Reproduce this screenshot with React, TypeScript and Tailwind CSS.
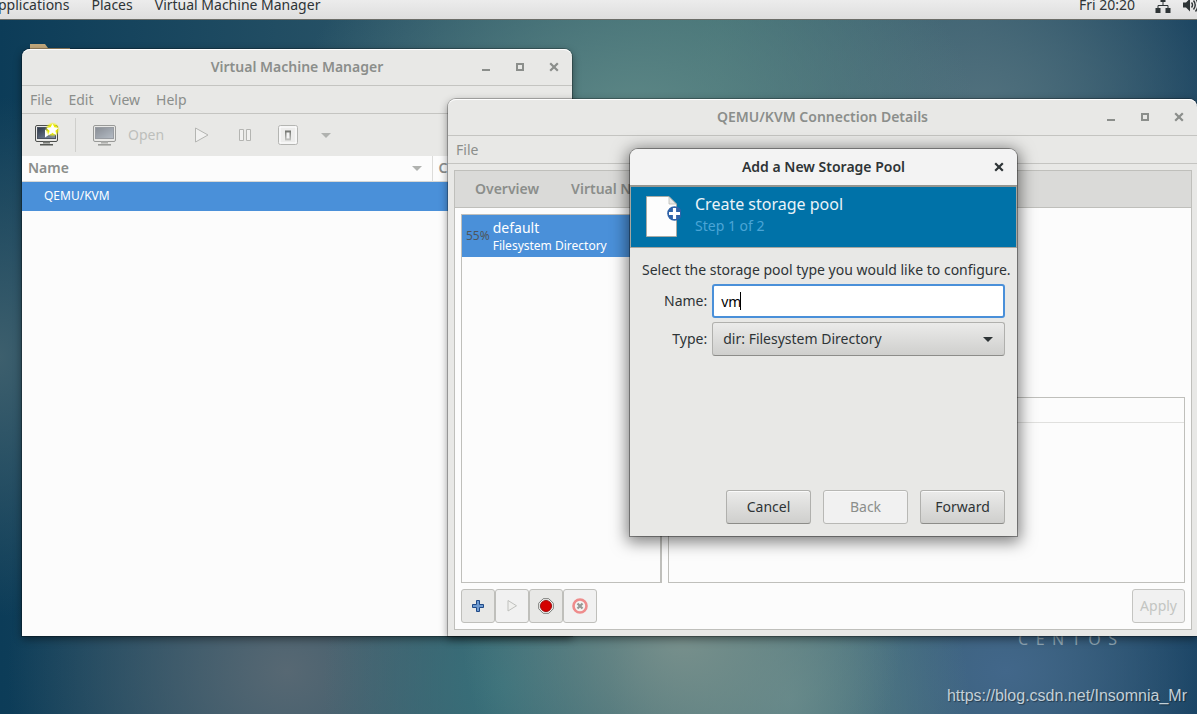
import type { ReactNode } from 'react';

const TitleBar = ({ title, minimizable = true }: { title: string; minimizable?: boolean }) => (
  <header className="grid h-9 grid-cols-[1fr_auto_1fr] items-center px-3">
    <span />
    <h2 className="font-semibold">{title}</h2>
    <div className="flex justify-end gap-[22px]">
      {minimizable && (
        <>
          <button aria-label="Minimize" className="size-3">
            <svg viewBox="0 0 12 12" className="size-3" fill="currentColor">
              <path d="M2 8h8v2H2z" />
            </svg>
          </button>
          <button aria-label="Maximize" className="size-3">
            <svg viewBox="0 0 12 12" className="size-3" fill="none" stroke="currentColor" strokeWidth="2">
              <path d="M3 3h6v6H3z" />
            </svg>
          </button>
        </>
      )}
      <button aria-label="Close" className="size-3">
        <svg viewBox="0 0 12 12" className="size-3" fill="none" stroke="currentColor" strokeWidth="2.2">
          <path d="M2.2 2.200l7.600 7.600M9.800 2.200L2.200 9.800" />
        </svg>
      </button>
    </div>
  </header>
);

const MenuBar = ({ items }: { items: string[] }) => (
  <nav className="flex h-[29px] items-center gap-4 border-y border-[#c4c4c1] px-2">
    {items.map((item) => (
      <button key={item}>{item}</button>
    ))}
  </nav>
);

const Monitor = ({ id, muted = false }: { id: string; muted?: boolean }) => (
  <g opacity={muted ? 0.5 : 1}>
    <defs>
      <linearGradient id={id} x1="0" y1="0" x2="1" y2="1">
        <stop offset="0" stopColor="#2c3646" />
        <stop offset="1" stopColor="#8391a5" />
      </linearGradient>
    </defs>
    <rect x="1.5" y="3.5" width="22" height="16" rx="1.5" fill="#e9e9e7" stroke="#4d4f4d" />
    <rect x="3.5" y="5.5" width="18" height="11" fill={`url(#${id})`} stroke="#4a5260" />
    <path d="M9 19.5h7v2H9z" fill="#777975" />
    <path d="M6 22h13v1.6H6z" fill="#555753" />
  </g>
);

const NewVmIcon = () => (
  <svg viewBox="0 0 26 26" className="size-[26px]">
    <defs>
      <radialGradient id="glow">
        <stop offset="0.6" stopColor="#ecec00" />
        <stop offset="1" stopColor="#f5f53c" stopOpacity="0" />
      </radialGradient>
    </defs>
    <Monitor id="screen-new" />
    <path d="M11 7.5l6 4-6 4z" fill="#fff" />
    <circle cx="18.500" cy="7.500" r="7.500" fill="url(#glow)" />
    <path
      d="M18.500 2.500l1.500 3.300 3.700.4-2.800 2.500.8 3.600-3.200-1.800-3.200 1.800.8-3.600-2.800-2.500 3.700-.4z"
      fill="#fff"
      stroke="#fff"
      strokeLinejoin="round"
    />
  </svg>
);

const Triangle = ({ className }: { className: string }) => (
  <svg viewBox="0 0 10 5" className={className} fill="currentColor">
    <path d="M0 0h10L5 5z" />
  </svg>
);

const Toolbar = () => (
  <div className="flex h-[42px] items-center text-[#bdbfbc]">
    <button aria-label="New virtual machine" className="ml-3">
      <NewVmIcon />
    </button>
    <span className="mx-[15px] h-[34px] w-px bg-[#cfcfcc]" />
    <button disabled className="flex items-center gap-2.5 pl-px">
      <svg viewBox="0 0 26 26" className="size-[26px]">
        <Monitor id="screen-open" muted />
      </svg>
      Open
    </button>
    <button disabled aria-label="Run" className="ml-[29px]">
      <svg viewBox="0 0 18 18" className="size-[18px]" fill="#f1f1f0" stroke="#b4b5b2">
        <path d="M2.500 2v14l12.500-7z" />
      </svg>
    </button>
    <button disabled aria-label="Pause" className="ml-[25px]">
      <svg viewBox="0 0 18 18" className="size-[18px]" fill="#f1f1f0" stroke="#b4b5b2">
        <path d="M3.500 3.500h4v11h-4zM10.500 3.500h4v11h-4z" />
      </svg>
    </button>
    <button disabled aria-label="Shut down" className="ml-[23px]">
      <svg viewBox="0 0 22 22" className="size-[22px]">
        <defs>
          <linearGradient id="switch" x1="0" y1="0" x2="0" y2="1">
            <stop offset="0" stopColor="#6e706c" />
            <stop offset="1" stopColor="#c6c7c4" />
          </linearGradient>
        </defs>
        <rect x="1.500" y="1.500" width="19" height="19" rx="2" fill="#ededec" stroke="#b4b5b2" />
        <rect x="3" y="3" width="16" height="16" fill="none" stroke="#fff" />
        <rect x="8" y="6.500" width="6" height="10" fill="url(#switch)" />
        <path d="M9.500 8.500h3v6h-3z" fill="#f4f4f4" />
      </svg>
    </button>
    <button disabled aria-label="Shut down options" className="ml-[22px]">
      <Triangle className="h-[5px] w-2.5 text-[#b0b2af]" />
    </button>
  </div>
);

const ManagerWindow = () => (
  <section className="absolute top-[49px] bottom-[78px] left-[22px] flex w-[550px] flex-col overflow-hidden rounded-t-lg bg-[#e8e8e6] text-[#8b8e8b] shadow-[0_0_0_1px_rgba(0,0,0,0.25),0_3px_9px_rgba(0,0,0,0.45),inset_0_1px_#fff]">
    <TitleBar title="Virtual Machine Manager" />
    <MenuBar items={['File', 'Edit', 'View', 'Help']} />
    <Toolbar />
    <div className="flex-1 bg-[#fcfcfc]">
      <table className="w-full table-fixed text-left">
        <thead>
          <tr className="h-[25px] border-b border-[#d8d8d5]">
            <th className="w-[410px] border-r border-[#dcdcda] px-1.5 font-semibold">
              <span className="flex items-center justify-between pr-1">
                Name
                <Triangle className="h-[5px] w-2.5 text-[#b0b2af]" />
              </span>
            </th>
            <th className="px-1.5 font-semibold">CPU usage</th>
          </tr>
        </thead>
        <tbody>
          <tr className="h-[30px] bg-[#4a90d9] text-xs text-white">
            <td className="pl-[22px]">QEMU/KVM</td>
            <td />
          </tr>
        </tbody>
      </table>
    </div>
  </section>
);

const ToolButton = ({ label, disabled, children }: { label: string; disabled?: boolean; children: ReactNode }) => (
  <button
    aria-label={label}
    disabled={disabled}
    className="flex size-[34px] items-center justify-center rounded-[3px] border border-[#bfbfbb] bg-[#e8e8e6] disabled:bg-[#f1f1f1]"
  >
    <svg viewBox="0 0 16 16" className="size-4">
      {children}
    </svg>
  </button>
);

const StorageButtons = () => (
  <div className="flex">
    <ToolButton label="Add pool">
      <path
        d="M6.500 2.500h3v4h4v3h-4v4h-3v-4h-4v-3h4z"
        fill="#6f9bd1"
        stroke="#204a87"
        strokeLinejoin="round"
      />
    </ToolButton>
    <ToolButton label="Start pool" disabled>
      <path d="M4 2.500v10.500l8.500-5.250z" fill="#f0f0ee" stroke="#bfc0bd" />
    </ToolButton>
    <ToolButton label="Stop pool">
      <path d="M5.200.7h5.600l4.500 4.500v5.600l-4.500 4.500H5.200L.7 10.800V5.200z" fill="#f3f3f2" stroke="#7a7c78" />
      <circle cx="8" cy="8" r="5.600" fill="#d40000" stroke="#8f0000" strokeWidth=".8" />
    </ToolButton>
    <ToolButton label="Delete pool" disabled>
      <circle cx="8" cy="8" r="6.500" fill="#f3f3f2" stroke="#ee8c8c" strokeWidth="2.600" />
      <path d="M5.500 5.500l5 5M10.500 5.500l-5 5" stroke="#969895" strokeWidth="2.200" />
    </ToolButton>
  </div>
);

const ConnectionWindow = () => (
  <section className="absolute top-[99px] right-0 bottom-[78px] left-[448px] flex flex-col overflow-hidden rounded-t-lg bg-[#e8e8e6] text-[#8b8e8b] shadow-[0_0_0_1px_rgba(0,0,0,0.25),0_3px_9px_rgba(0,0,0,0.45),inset_0_1px_#fff]">
    <TitleBar title="QEMU/KVM Connection Details" />
    <MenuBar items={['File']} />
    <div className="m-1.5 mr-[5px] flex flex-1 flex-col border border-[#bfbfbb] bg-[#fcfcfc]">
      <div role="tablist" className="flex h-[37px] items-center gap-8 overflow-hidden border-b border-[#bfbfbb] bg-[#dadad8] px-5 font-semibold whitespace-nowrap">
        <button role="tab">Overview</button>
        <button role="tab">Virtual Networks</button>
      </div>
      <div className="flex flex-1 flex-col gap-1.5 p-1.5">
        <div className="flex flex-1 gap-1.5">
          <ul className="w-[201px] border border-r-2 border-[#bfbfbb]">
            <li className="flex h-[42px] items-center gap-[3px] bg-[#4a90d9] px-1 text-white">
              <span className="text-xs text-[#4e565c]">55%</span>
              <span className="flex flex-col">
                <span className="leading-5">default</span>
                <span className="text-xs">Filesystem Directory</span>
              </span>
            </li>
          </ul>
          <div className="flex flex-1 flex-col justify-end">
            <div className="h-[186px] border border-[#bfbfbb]">
              <div className="h-[25px] border-b border-[#e0e0de]" />
            </div>
          </div>
        </div>
        <div className="flex justify-between">
          <StorageButtons />
          <button disabled className="h-[34px] rounded-[3px] border border-[#c4c4c1] bg-[#f1f1f1] px-[7px] text-[#c3c5c2]">
            Apply
          </button>
        </div>
      </div>
    </div>
  </section>
);

const DialogButton = ({ children, disabled }: { children: ReactNode; disabled?: boolean }) => (
  <button
    disabled={disabled}
    className="h-[34px] w-[85px] rounded-[3px] border border-[#b0b0ad] border-b-[#8c8c89] bg-linear-to-b from-[#ebebea] to-[#cfcfcd] shadow-[inset_0_1px_#fafafa] disabled:border-[#b8b8b5] disabled:from-[#f1f1f1] disabled:to-[#f1f1f1] disabled:text-[#8b8e8b]"
  >
    {children}
  </button>
);

const StoragePoolDialog = () => (
  <section
    role="dialog"
    aria-label="Add a New Storage Pool"
    className="absolute top-[149px] left-[630px] flex h-[387px] w-[387px] flex-col overflow-hidden rounded-t-lg bg-[#e8e8e6] text-[#2e3436] shadow-[0_0_0_1px_rgba(0,0,0,0.35),0_3px_16px_3px_rgba(0,0,0,0.5)]"
  >
    <div className="bg-[#f3f3f3]">
      <TitleBar title="Add a New Storage Pool" minimizable={false} />
    </div>
    <div className="flex h-[63px] gap-3.5 border-x border-t-2 border-b border-x-[#a6a6a0] border-t-[#95958f] border-b-[#a6a6a0] bg-[#0072a8] pt-2 pl-3.5">
      <svg viewBox="0 0 36 44" className="h-11 w-9">
        <path d="M1.500 1.500h22.500l7.500 7.500v32.500h-30z" fill="#fdfdfd" stroke="#a9aba5" />
        <path d="M24 2v7h7z" fill="#e9e9e7" stroke="#b9bab6" strokeWidth=".8" />
        <circle cx="29.500" cy="18.500" r="7.300" fill="#2f62a8" />
        <path d="M29.500 13v11M24 18.500h11" stroke="#fff" strokeWidth="3.200" />
      </svg>
      <div>
        <h3 className="text-base leading-[18px] text-[#eaf3f8]">Create storage pool</h3>
        <p className="mt-[3px] text-[#4aa5d6]">Step 1 of 2</p>
      </div>
    </div>
    <form className="flex flex-1 flex-col p-3" onSubmit={(e) => e.preventDefault()}>
      <p className="whitespace-nowrap">Select the storage pool type you would like to configure.</p>
      <div className="mt-1 grid grid-cols-[auto_1fr] items-center gap-x-[5px] gap-y-1">
        <label htmlFor="pool-name" className="pl-[22px] text-right">
          Name:
        </label>
        <div className="relative">
          <input
            id="pool-name"
            defaultValue="vm"
            className="block h-[34px] w-full rounded-[3px] border-2 border-[#4a90d9] bg-white px-[7px] text-black caret-transparent outline-none"
          />
          <span className="absolute top-2 left-7 h-[18px] w-px bg-black" />
        </div>
        <label htmlFor="pool-type" className="text-right">
          Type:
        </label>
        <div className="grid items-center">
          <select
            id="pool-type"
            className="col-start-1 row-start-1 h-[34px] w-full appearance-none rounded-[3px] border border-[#b0b0ad] border-b-[#8c8c89] bg-linear-to-b from-[#ebebea] to-[#cfcfcd] px-2.5"
          >
            <option>dir: Filesystem Directory</option>
          </select>
          <Triangle className="pointer-events-none col-start-1 row-start-1 mr-3 h-[5px] w-2.5 justify-self-end" />
        </div>
      </div>
      <div className="mt-auto flex justify-end gap-3">
        <DialogButton>Cancel</DialogButton>
        <DialogButton disabled>Back</DialogButton>
        <DialogButton>Forward</DialogButton>
      </div>
    </form>
  </section>
);

const TopPanel = () => (
  <header className="relative h-5 overflow-hidden border-b border-[#6b6d68] bg-linear-to-b from-[#ececec] to-[#dedede] text-[#2e3436]">
    <div className="-mt-[9px] flex h-7 items-center">
      <nav className="-ml-[11px] flex gap-[22px]">
        <button>Applications</button>
        <button>Places</button>
        <button>Virtual Machine Manager</button>
      </nav>
      <span className="ml-auto">Fri 20:20</span>
      <svg viewBox="0 0 16 16" className="ml-5 size-4" fill="currentColor">
        <path d="M5.500 0h5v5h-5zM.500 11h5v5h-5zM10.500 11h5v5h-5z" />
        <path d="M8 4v4M3 12V8.500h10V12" fill="none" stroke="currentColor" />
      </svg>
      <svg viewBox="0 0 16 16" className="-mr-0.5 ml-3 size-4" fill="currentColor">
        <path d="M0 5.500h3L7 1.500v13L3 10.500H0z" />
        <path d="M8.500 5.500q2 2.500 0 5M10.500 3.500q3.500 4.500 0 9M12.500 1.500q5 6.500 0 13" fill="none" stroke="currentColor" strokeWidth="1.400" />
      </svg>
    </div>
  </header>
);

const Desktop = ({ children }: { children: ReactNode }) => (
  <main className="relative h-screen w-full overflow-hidden bg-[#2c5468] bg-[radial-gradient(ellipse_340px_220px_at_53%_16%,#5d8786,transparent),radial-gradient(ellipse_300px_200px_at_82%_14%,#50707d,transparent),radial-gradient(ellipse_220px_220px_at_57%_89%,#78908c,transparent),radial-gradient(ellipse_180px_200px_at_66%_98%,#5b8488,transparent),radial-gradient(ellipse_250px_200px_at_84%_94%,#42678a,transparent),radial-gradient(ellipse_180px_220px_at_42%_96%,#37707a,transparent),radial-gradient(ellipse_280px_260px_at_24%_94%,#576873,transparent),radial-gradient(ellipse_160px_260px_at_0%_50%,#3d5f6d,transparent),linear-gradient(to_right,#0c3c58,#2b5568_34%,#3c6b70_60%,#33596b_82%,#113c5c)] font-['Noto_Sans',sans-serif] text-sm">
    {children}
  </main>
);

export default function App() {
  return (
    <Desktop>
      <TopPanel />
      <svg viewBox="0 0 40 12" className="absolute top-11 left-[30px] h-3 w-10">
        <path d="M0 0h15l3 4h22v8H0z" fill="#c3a97c" />
      </svg>
      <div aria-label="CentOS" className="absolute right-20 bottom-[65px] flex w-[99px] justify-between text-base leading-5 text-[#8ea5b3]">
        {[...'CENTOS'].map((letter) => (
          <span key={letter}>{letter}</span>
        ))}
      </div>
      <p className="absolute right-2.5 bottom-1.5 font-['Liberation_Sans',sans-serif] text-base text-[#c3d0d8] [text-shadow:1px_1px_1px_rgba(0,0,0,0.4)]">
        https://blog.csdn.net/Insomnia_Mr
      </p>
      <ManagerWindow />
      <ConnectionWindow />
      <StoragePoolDialog />
    </Desktop>
  );
}
